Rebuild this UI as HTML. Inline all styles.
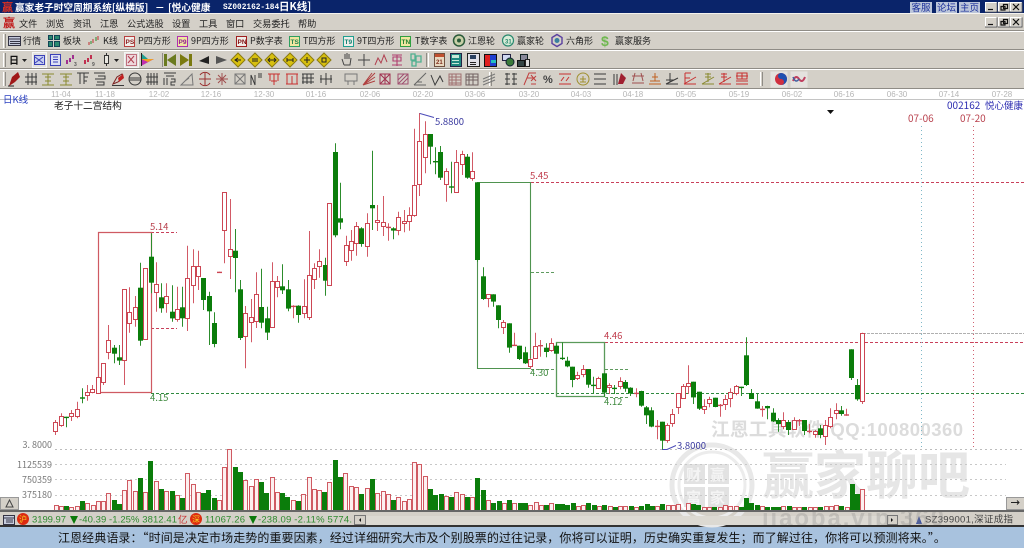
<!DOCTYPE html>
<html lang="zh"><head><meta charset="utf-8"><title>赢家老子时空周期系统</title>
<style>
html,body{margin:0;padding:0;background:#fff}
#p{position:relative;width:1024px;height:548px;overflow:hidden;background:#d4d0c8;font:9px "Noto Sans CJK SC",sans-serif;color:#222;filter:blur(.3px)}
#p div{position:absolute;white-space:nowrap}
svg{position:absolute;left:0;top:0}
text{font-family:"Noto Sans CJK SC",sans-serif}
.m{top:16px;font-size:9.2px;line-height:14px;color:#222}
.t{top:34px;font-size:9px;line-height:14px;color:#222}
.d{top:90px;font:8px "Liberation Sans",sans-serif;color:#b5b5b5;line-height:9px;transform:translateX(-50%)}
.b{top:2px;height:11px;background:#bcc6da;color:#1a2f9a;font-size:9.5px;line-height:11px;text-align:center}
.h{top:0;color:#fff;font-weight:bold;font-size:9.7px;line-height:14px}
</style></head><body><div id="p">
<div style="left:0;top:0;width:1024px;height:13px;background:#0a246a"></div>
<div class="h" style="left:15px">赢家老子时空周期系统[纵横版]</div>
<div class="h" style="left:155px">－</div>
<div class="h" style="left:168px">[悦心健康</div>
<div class="h" style="left:223px;top:3px;line-height:10px;font-family:'Liberation Mono',monospace;font-size:7.8px">SZ002162-184</div>
<div class="h" style="left:279px;font-size:10.5px">日K线]</div>
<div class="b" style="left:910px;width:22px">客服</div><div class="b" style="left:936px;width:21px">论坛</div><div class="b" style="left:959px;width:21px">主页</div>
<div style="left:0;top:89px;width:1024px;height:422px;background:#fff"></div>
<div style="left:0;top:527px;width:1024px;height:21px;background:#a8c2de"></div>
<div style="left:0;top:525px;width:1024px;height:2px;background:#333"></div>

<div class="m" style="left:19px">文件</div><div class="m" style="left:46px">浏览</div><div class="m" style="left:73px">资讯</div><div class="m" style="left:100px">江恩</div><div class="m" style="left:127px">公式选股</div><div class="m" style="left:172px">设置</div><div class="m" style="left:199px">工具</div><div class="m" style="left:226px">窗口</div><div class="m" style="left:253px">交易委托</div><div class="m" style="left:298px">帮助</div>

<div class="t" style="left:23px">行情</div><div class="t" style="left:63px">板块</div><div class="t" style="left:103px">K线</div><div class="t" style="left:138px">P四方形</div><div class="t" style="left:191px">9P四方形</div><div class="t" style="left:250px">P数字表</div><div class="t" style="left:303px">T四方形</div><div class="t" style="left:357px">9T四方形</div><div class="t" style="left:415px">T数字表</div><div class="t" style="left:468px">江恩轮</div><div class="t" style="left:517px">赢家轮</div><div class="t" style="left:566px">六角形</div><div class="t" style="left:615px">赢家服务</div>

<div class="d" style="left:61px">11-04</div><div class="d" style="left:105px">11-18</div><div class="d" style="left:159px">12-02</div><div class="d" style="left:211px">12-16</div><div class="d" style="left:264px">12-30</div><div class="d" style="left:316px">01-16</div><div class="d" style="left:370px">02-06</div><div class="d" style="left:423px">02-20</div><div class="d" style="left:475px">03-06</div><div class="d" style="left:529px">03-20</div><div class="d" style="left:581px">04-03</div><div class="d" style="left:633px">04-18</div><div class="d" style="left:686px">05-05</div><div class="d" style="left:739px">05-19</div><div class="d" style="left:792px">06-02</div><div class="d" style="left:844px">06-16</div><div class="d" style="left:897px">06-30</div><div class="d" style="left:949px">07-14</div><div class="d" style="left:1002px">07-28</div>

<svg id="s" width="1024" height="548" viewBox="0 0 1024 548" fill="none">
<g id="wm" stroke="none">
<text x="711" y="436" font-size="18.5" font-weight="bold" fill="#dcdcdc" textLength="252" style="font-family:'Liberation Sans','Noto Sans CJK SC',sans-serif">江恩工具软件 QQ:100800360</text>
<text x="762" y="494" font-size="52" font-weight="bold" fill="#e6e6e6">赢家聊吧</text>
<circle cx="712" cy="485" r="40" fill="none" stroke="#e8e8e8" stroke-width="5"/>
<circle cx="712" cy="485" r="33" fill="none" stroke="#ececec" stroke-width="3"/>
<rect x="684" y="464" width="21" height="20" fill="#e2e2e2"/><rect x="708" y="464" width="21" height="20" fill="#e2e2e2"/><rect x="684" y="487" width="21" height="20" fill="#e2e2e2"/><rect x="708" y="487" width="21" height="20" fill="#e2e2e2"/>
<text x="686" y="480" font-size="15" font-weight="bold" fill="#f4f4f4">财</text><text x="710" y="480" font-size="15" font-weight="bold" fill="#f4f4f4">赢</text><text x="686" y="503" font-size="15" font-weight="bold" fill="#f4f4f4">富</text><text x="710" y="503" font-size="15" font-weight="bold" fill="#f4f4f4">家</text>
</g>
<path d="M0 99.5H1024" stroke="#c4c4c4"/>
<g id="lines"></g>
<g id="cd"></g>
<g id="vol"></g>
<g id="lbl" stroke="none" font-size="9.5" style="font-family:'Liberation Sans'">
<text x="150" y="230" fill="#b8404c">5.14</text>
<text x="150" y="401" fill="#3f8a3f">4.15</text>
<text x="530" y="179" fill="#c03c4c">5.45</text>
<text x="530" y="376" fill="#3f8a3f">4.30</text>
<text x="604" y="339" fill="#c03c4c">4.46</text>
<text x="604" y="405" fill="#3f8a3f">4.12</text>
<text x="435" y="125" fill="#3c3ca0">5.8800</text>
<text x="677" y="449" fill="#3c3ca0">3.8000</text>
<text x="908" y="122" fill="#b8404c" font-size="10">07-06</text>
<text x="960" y="122" fill="#b8404c" font-size="10">07-20</text>
<text x="947" y="109" fill="#2a2ab0" font-size="10">002162</text>
<text x="985" y="109" fill="#2a2ab0" font-size="9.5" style="font-family:'Noto Sans CJK SC',sans-serif">悦心健康</text>
<text x="3" y="103" fill="#2a40c0" font-size="9.5" style="font-family:'Noto Sans CJK SC',sans-serif">日K线</text>
<text x="54" y="109" fill="#222" font-size="9.7" style="font-family:'Noto Sans CJK SC',sans-serif">老子十二宫结构</text>
<g fill="#777" font-size="9" text-anchor="end"><text x="52" y="448">3. 8000</text><text x="52" y="468">1125539</text><text x="52" y="483">750359</text><text x="52" y="498">375180</text></g>
</g>
<path d="M827 110h7l-3.500 4z" fill="#111"/>
<!-- chart buttons -->
<rect x="0.500" y="497.500" width="18" height="12" fill="#d4d0c8" stroke="#999"/><path d="M6 507l3.500-7 3.500 7z" stroke="#444"/>
<rect x="1006.500" y="497.500" width="18" height="12" fill="#d4d0c8" stroke="#999"/><path d="M1011 502.500h8m-2-2l2 2-2 2" stroke="#222"/>
<!-- status strip -->
<rect x="0" y="510" width="1024" height="2" fill="#666"/>
<g id="status">
<rect x="3.500" y="515.500" width="11" height="9" fill="#c7cdde" stroke="#334"/><path d="M4 518h10M6 520h7M6 522h7" stroke="#334"/>
<circle cx="23" cy="519" r="6" fill="#dc2a10"/><text x="19" y="522" font-size="8" fill="#f6d020">沪</text>
<text x="32" y="522.500" font-size="9.5" fill="#2f8a2f" style="font-family:'Liberation Sans'" textLength="34">3199.97</text>
<path d="M70 516h8l-4 8z" fill="#0a7a0a"/>
<text x="79" y="522.500" font-size="9.5" fill="#2f8a2f" style="font-family:'Liberation Sans'" textLength="98">-40.39 -1.25% 3812.41</text>
<text x="178" y="523" font-size="9.5" fill="#c83030">亿</text>
<circle cx="196" cy="519" r="6" fill="#dc2a10"/><text x="192" y="522" font-size="8" fill="#f6d020">深</text>
<text x="205" y="522.500" font-size="9.5" fill="#2f8a2f" style="font-family:'Liberation Sans'" textLength="40">11067.26</text>
<path d="M249 516h8l-4 8z" fill="#0a7a0a"/>
<text x="258" y="522.500" font-size="9.5" fill="#2f8a2f" style="font-family:'Liberation Sans'" textLength="94">-238.09 -2.11% 5774.</text>
<rect x="354.500" y="515.500" width="11" height="9" fill="#d4d0c8" stroke="#777"/><path d="M361 518v4l-2-2z" fill="#111"/>
<rect x="366" y="516" width="520" height="9" fill="#dcd9d2"/>
<rect x="887.500" y="515.500" width="10" height="9" fill="#d4d0c8" stroke="#777"/><path d="M891 518v4l2-2z" fill="#111"/>
<path d="M910 513v12" stroke="#999"/>
<path d="M916 524l3-8 3 8z" fill="#3a50a0"/>
<text x="925" y="522.500" font-size="9.5" fill="#444" style="font-family:'Liberation Sans','Noto Sans CJK SC'" textLength="88">SZ399001,深证成指</text>
<svg x="700" y="512" width="270" height="13"><text x="62" y="14" font-size="24" font-weight="bold" fill="#8a8a8a" fill-opacity=".3" textLength="182" style="font-family:'Liberation Sans'">jiaoba.vip 360</text></svg>
</g>
<!-- toolbar separators -->
<g stroke="#8f8c86"><path d="M0 13.500H1024" stroke="#f4f2ee"/><path d="M0 30.500H1024M0 49.500H1024M0 68.500H1024M0 88.500H1024"/></g>
<g stroke="#fff"><path d="M0 31.500H1024M0 50.500H1024M0 69.500H1024"/><path d="M3.500 34v14M3.500 53v14M3.500 72v14M428.500 53v14M489.500 72v14M760.500 72v14" stroke="#fff"/></g>
<g stroke="#8f8c86"><path d="M5.500 34v14M5.500 53v14M5.500 72v14M162.500 53v14M426.500 53v14M491.500 72v14M762.500 72v14"/></g>
<g id="ic"></g>
<!-- window buttons -->
<g stroke="#444"><g id="wb"></g></g>
<!-- main logo -->
<text x="3" y="27" font-size="12" font-weight="bold" fill="#c01818" stroke="none">赢</text>
<text x="2" y="11" font-size="11" font-weight="bold" fill="#e03020" stroke="none">赢</text>
</svg>
<div style="left:58px;top:530px;font-size:12px;line-height:15px;color:#111;letter-spacing:.08px;font-family:'Noto Sans CJK SC',sans-serif">江恩经典语录：“时间是决定市场走势的重要因素，经过详细研究大市及个别股票的过往记录，你将可以证明，历史确实重复发生；而了解过往，你将可以预测将来。”。</div>
</div>
<script>
var NS='http://www.w3.org/2000/svg';
function E(par,tag,at,txt){var e=document.createElementNS(NS,tag);for(var k in at)e.setAttribute(k,at[k]);if(txt)e.textContent=txt;document.getElementById(par).appendChild(e);return e}
/* reference lines */
[["M151 393.500H1024","#2f8a3f","3 2"],["M531 182.500H1024","#c8405a","3 2"],["M605 342.500H1024","#c8405a","3 2"],
 ["M151 232.500H177","#c8405a","3 2"],["M151 328.500H177","#c8405a","3 2"],["M531 272.500H556","#5f9a5f","3 2"],["M531 369.500H556","#5f9a5f","3 2"],["M605 369.500H630","#5f9a5f","3 2"],["M605 397.500H630","#5f9a5f","3 2"],
 ["M921.500 126V449","#7fb8c8","1 3"],["M973.500 126V449","#d06070","1 3"],
 ["M55 449.500H1024","#bdbdbd","2 3"],["M55 464.500H1006","#c8c8c8","2 3"],["M55 479.500H1006","#c8c8c8","2 3"],["M55 495.500H1006","#c8c8c8","2 3"],
 ["M863 333.500H1024","#b0b0b0","3 1"]
].forEach(function(l){E('lines','path',{d:l[0],stroke:l[1],'stroke-dasharray':l[2]})});
[["M98.500 392.500V232.500H151.500V392.500Z","#cf5a62",1.2],["M477.500 182.500V368.500H530.500V182.500H477.500Z","#4f934f",1.1],["M556.500 342.500V396.500H604.500V342.500Z","#5a9a5a",1.3],
 ["M419.500 113V113.500H420L434 117.500","#4a4ab8",1],["M662 449.500H667L676 445.500","#4a4ab8",1]
].forEach(function(l){E('lines','path',{d:l[0],stroke:l[1],'stroke-width':l[2]})});
/* candles in zoom-crop coordinates */
function C(ox,oy,a){a.forEach(function(c){
 var X=Math.round(ox+c[0]/3),h=oy+c[2]/3,t=oy+c[3]/3,b=oy+c[4]/3,l=oy+c[5]/3,r=c[1]=='r';
 var col=r?'#cc4653':'#0b7d0b';
 E('cd','path',{d:'M'+(X+.5)+' '+h.toFixed(1)+'V'+l.toFixed(1),stroke:r?'#d25a66':'#2c8c2c'});
 if(b-t<1.6){E('cd','rect',{x:X-2,y:t.toFixed(1),width:5,height:1.4,fill:col});return}
 if(r)E('cd','rect',{x:X-1.5,y:Math.round(t)+.5,width:4,height:Math.max(1,Math.round(b-t)),fill:'#fff',stroke:col});
 else E('cd','rect',{x:X-2,y:t.toFixed(1),width:5,height:(b-t).toFixed(1),fill:col});
})}
C(40,130,[[46,'r',870,875,903,915],[62,'r',850,857,885,890],[78,'g',860,860,864,892],[94,'r',840,848,857,873],[110,'r',815,836,857,865],[126,'g',775,802,805,820],[142,'r',765,785,793,812],[157,'r',765,778,787,790],[173,'r',738,740,787,788],[189,'r',700,700,758,765],[205,'r',585,629,666,688],[221,'g',645,653,671,700],[237,'g',645,682,692,705],[253,'r',478,478,690,765],[268,'r',472,546,578,608],[284,'r',498,532,569,590],[300,'g',398,473,632,647],[316,'r',415,415,628,628],[332,'g',310,380,458,490],[347,'r',397,463,488,545],[363,'g',460,502,535,548],[379,'r',460,498,520,548],[395,'g',466,545,565,575],[411,'r',470,536,565,575],[427,'g',470,532,565,590],[442,'r',347,444,565,603],[458,'r',358,409,466,520],[474,'r',362,409,438,480],[490,'g',444,444,510,540],[506,'g',485,498,544,645],[522,'g',547,579,642,652],[538,'r',425,425,427,427],[553,'r',187,187,301,400],[569,'r',207,358,380,447]]);
C(230,110,[[14,'g',357,422,444,547],[30,'g',510,538,684,690],[46,'r',588,610,678,775],[62,'r',567,622,638,697],[78,'r',487,553,633,654],[94,'g',476,591,638,655],[110,'g',590,625,668,690],[125,'r',457,513,651,652],[141,'r',498,513,531,562],[157,'g',463,529,541,552],[173,'g',510,538,596,604],[189,'r',586,587,590,625],[205,'g',586,587,615,638],[221,'r',508,588,608,625],[236,'r',363,495,620,630],[252,'r',460,475,507,537],[268,'r',418,452,468,503],[284,'g',443,465,512,557],[298,'r',280,280,527,527],[315,'g',100,126,376,382],[331,'g',218,325,338,358],[347,'r',377,406,455,468],[362,'r',360,394,421,452],[378,'r',336,349,401,437],[394,'g',352,355,402,410],[410,'r',310,340,410,440],[426,'g',122,285,295,360],[442,'r',285,331,338,363],[458,'r',258,335,347,378],[473,'r',340,350,353,392],[490,'g',352,355,362,388],[505,'r',305,322,362,376],[521,'r',300,333,338,367],[537,'r',292,314,333,362],[553,'r',56,224,314,320],[568,'r',10,94,222,258],[584,'r',34,73,142,190],[600,'g',72,72,110,163],[616,'g',112,153,156,193],[631,'g',108,126,203,210],[647,'r',175,183,223,275],[663,'g',155,229,232,250],[679,'r',120,155,245,245],[695,'r',122,132,163,195],[711,'g',132,140,203,206],[726,'r',127,183,203,212]]);
C(470,170,[[22,'g',37,37,270,275],[38,'g',292,319,387,390],[54,'r',373,373,385,412],[69,'g',373,373,395,410],[85,'g',406,406,450,475],[100,'r',450,455,470,492],[116,'g',460,460,533,548],[132,'r',488,524,526,526],[148,'g',527,527,567,570],[164,'g',530,547,580,582],[180,'r',565,568,590,597],[196,'r',488,527,563,563],[211,'r',510,525,528,560],[227,'g',520,533,546,562],[243,'r',505,518,540,545],[259,'g',520,527,551,552],[275,'g',517,563,566,570],[291,'g',560,572,589,592],[306,'g',590,590,630,652],[322,'r',605,616,624,630],[338,'r',585,597,612,622],[354,'g',597,597,644,653],[370,'g',620,644,647,672],[385,'r',620,624,653,655],[401,'g',610,610,668,680],[417,'r',640,645,652,672],[433,'g',645,653,655,672],[449,'r',622,634,648,658],[465,'g',630,636,656,665],[480,'g',652,653,670,678],[497,'r',655,668,670,682],[512,'g',662,663,707,710],[528,'g',708,712,736,762],[544,'g',712,721,770,772],[560,'r',750,767,769,808],[576,'g',755,755,812,838]]);
C(640,320,[[82,'r',310,315,360,368],[97,'r',267,283,310,320],[113,'r',220,220,261,282],[128,'r',192,199,234,235],[144,'r',136,190,198,222],[160,'g',185,185,232,252],[176,'g',215,215,266,270],[192,'r',238,257,267,282],[208,'r',230,237,248,262],[224,'g',233,233,261,262],[240,'r',252,254,256,290],[256,'r',225,237,252,270],[271,'r',205,215,232,262],[287,'r',195,198,220,226],[303,'g',200,200,203,228],[319,'g',52,106,195,198],[334,'g',207,219,237,237],[350,'g',222,244,266,266],[366,'r',258,266,268,290],[382,'g',257,258,265,298],[398,'g',265,278,304,306],[413,'g',295,300,312,335],[429,'r',277,301,320,328],[445,'g',300,306,330,345],[461,'r',292,301,329,330],[477,'r',297,300,302,318],[492,'g',300,300,333,345],[508,'r',312,332,334,340],[524,'r',330,333,342,353],[540,'g',315,325,345,355],[556,'r',300,316,350,375],[571,'r',265,292,320,325],[587,'r',250,271,280,298],[603,'g',258,271,282,287],[619,'r',266,283,285,287],[634,'g',88,88,174,180],[650,'g',177,195,238,242],[666,'r',38,38,243,252]]);
/* volume */
function V(ox,oy,s){s.split(' ').forEach(function(p){
 var q=p.split(','),X=Math.round(ox+q[0]/3),r=q[1]=='r',y=Math.round(oy+q[2]/3);
 if(r)E('vol','rect',{x:X-1.5,y:y+.5,width:4,height:510-y,fill:'#fdf0f0',stroke:'#cf5a62'});
 else E('vol','rect',{x:X-2,y:y,width:5,height:510-y,fill:'#0b7d0b'});
})}
V(0,430,"167,r,226 183,r,229 198,g,228 214,r,230 230,r,227 246,g,212 262,r,220 278,r,224 294,r,214 310,r,214 325,r,190 341,g,210 357,g,221 373,r,181 388,r,151 404,r,184 420,g,145 436,r,185 451,g,92 467,r,154 483,g,176 499,r,183 515,g,183 531,r,194 546,g,203 562,r,129 578,r,163 594,r,185 610,g,189 625,g,181 641,g,205 657,r,211 673,r,112 688,r,58 704,g,110 720,g,126 736,r,149 752,r,169 767,r,147 783,g,155 799,g,189 815,r,142 831,r,187 847,g,189 862,g,201 878,r,211 894,g,212 910,r,193 926,r,142 941,r,178 957,r,181 973,g,185 988,r,157 1005,g,90 1020,g,141");
V(340,430,"16,r,128 32,r,169 48,r,172 64,g,191 80,r,175 96,g,146 112,r,190 128,r,184 143,r,191 159,g,211 175,r,201 191,r,214 207,r,207 223,r,97 238,r,101 254,r,139 270,g,176 286,g,195 302,g,193 318,r,199 333,g,202 349,r,187 365,r,192 381,g,201 396,r,202 412,g,144 428,g,180 444,r,211 460,g,218 476,g,214 491,r,219 507,g,211 523,r,220 539,g,220 555,g,220 571,r,226 587,r,217 602,r,225 618,g,225 634,r,220 650,g,223 666,g,223 682,g,225 698,g,220 714,r,229 729,r,225 745,g,220 761,g,225 777,r,228 793,g,225 809,r,229 825,g,230 840,r,228 856,r,229 872,g,229 888,r,230 904,g,227 920,g,222 936,g,228 951,r,228 967,g,222 983,r,226 999,r,226 1015,r,222");
V(684,400,"11,r,310 27,g,312 43,g,316 59,r,322 75,r,322 91,g,322 107,r,322 123,r,316 139,r,318 155,r,318 170,g,322 186,g,293 202,g,308 218,g,316 234,r,318 250,g,320 266,g,320 282,g,320 298,r,318 314,g,318 330,r,320 345,r,322 361,g,320 377,r,322 393,r,322 409,g,320 425,r,318 441,r,318 456,r,315 472,g,318 488,r,322 504,g,252 519,g,282 535,r,266");
/* icons */
function P(x,y,c,d,w){var g=E('ic','path',{d:d,stroke:c,transform:'translate('+x+' '+y+')'});if(w)g.setAttribute('stroke-width',w);return g}
function F(x,y,c,d){return E('ic','path',{d:d,fill:c,transform:'translate('+x+' '+y+')'})}
function R(x,y,w,h,f,s){E('ic','rect',{x:x+.5,y:y+.5,width:w,height:h,fill:f,stroke:s||'none'})}
function T(x,y,s,c,z){E('ic','text',{x:x,y:y,fill:c,'font-size':z||7,'font-weight':'bold',style:"font-family:'Liberation Sans'"},s)}
/* toolbar 1 */
R(8,36,12,9,'#c4c9dc','#334');P(8,0,'#334','M1 39H12M2 41.500h10M2 43.500h10');
R(48,35,4,4,'#2a8a70','#145');R(54,35,5,4,'#2a8a70','#145');R(48,41,4,5,'#2a8a70','#145');R(54,41,5,5,'#2a8a70','#145');
P(88,41,'#c03030','M1 4v-3M5 2v-4');P(88,41,'#2a8a2a','M3 3v-3M8 0v-4');P(88,41,'#c03030','M10 -1v-4');
[[124,'PS','#b84040','#8a2020','#f0eeea'],[177,'P9','#b030b0','#902090','#f0e6a0'],[236,'PN','#a02020','#801010','#f0eeea'],[289,'TS','#2fa060','#208050','#f0e6a0'],[343,'T9','#20a090','#108070','#f0eeea'],[400,'TN','#30a040','#208030','#f0e6a0']].forEach(function(a){R(a[0],36,10,10,a[4],a[2]);T(a[0]+1.5,44,a[1],a[3],6.5)});
E('ic','circle',{cx:459,cy:40.500,r:5.500,stroke:'#2a5a3a','stroke-width':1.5,fill:'#c8d0a8'});E('ic','circle',{cx:459,cy:40.500,r:2,fill:'#2a5a3a'});
E('ic','circle',{cx:508,cy:40.500,r:5.500,stroke:'#2a8a70',fill:'#d8ecd8','stroke-width':1.2});T(505,43.500,'31','#2a8a70',6);
P(557,40.500,'#5a40a0','M0-6L5-3V3L0 6L-5 3V-3Z',1.4);E('ic','circle',{cx:557,cy:40.500,r:2.500,fill:'#3a80a0'});
T(601,46,'$','#70b850',14);
/* toolbar 2 */
E('ic','text',{x:9,y:64,'font-size':10,fill:'#111','font-weight':'bold'},'日');F(22,59,'#222','M0 0h5l-2.500 3z');
R(32,52,14,15,'#e4e2de','#f4f4f4');R(34,55,10,9,'#c8d0f0','#3a40b8');P(34,55,'#3a40b8','M1 2l8 6M9 2l-8 6');
R(50,54,10,11,'#dde0f4','#3a40b8');P(50,54,'#3a40b8','M3 3h5M3 5.500h5M3 8h5');
P(66,66,'#a03090','M1-2v-4M4-4v-4M7-7v-4',2);T(74,66,'3','#555',5);P(84,66,'#c03050','M1-2v-4M4-4v-4M7-7v-4',2);T(92,66,'9','#555',5);
R(104,55,4,8,'#e8e6e0','#333');P(104,53,'#333','M2.500 0v2M2.500 10v3');F(114,59,'#222','M0 0h5l-2.500 3z');
R(124,52,14,15,'#e8e6e2','#f4f4f4');R(126,54,10,11,'#eed8dc','#c07080');P(126,54,'#b04050','M2 2l6 7M8 2l-6 7');
F(141,53,'#20a090','M0 0l7 6H0z');F(141,59,'#c030b0','M0 0h13L0 7z');F(141,59,'#f0a020','M0 0h13l-6 3z');P(141,53,'#222','M.500 0V13');
[[169],[186],[204],[222]].forEach(function(a,i){
 if(i<2)F(a[0]-(i?1:2),60,i?'#7a7a10':'#6a7a20',i?'M-5-6L4 0L-5 6zM4-6h3V6H4z':'M-3-6h3V6h-3zM0 0l9-6V6z');
 else F(a[0],60,i==2?'#222':'#555',i==2?'M5-4V4L-5 1z':'M-6-4V4L5 0z');
});
[238,255,272,290,307,324].forEach(function(x,i){F(x,60,'#d8c010','M0-7L7 0L0 7L-7 0Z');P(x,60,'#8a7a10','M0-7L7 0L0 7L-7 0Z');P(x,60,'#222',['M-3 0H3M0-2L-3 0L0 2','M-3-1H3M-3 1H3','M-3 0H3M-2-2L-4 0L-2 2M2-2L4 0L2 2','M-3-2V2M3-2V2M-3 0H3','M0-3V3M-3 0H3','M-2-2H2V2H-2Z'][i])});
P(347,60,'#444','M-3 5L-5-1M-3 5h6l1-7M-2-1v-5M0-1v-6M2-1v-5');
P(364,60,'#444','M-6 0H6M0-6V6');
P(381,60,'#b04050','M-6 5L-3-2L0 3L3-5L6 2');P(397,60,'#b04070','M-5-5h10M-4-3h8v4h-8zM0-5V6M-5 5h10',1.1);P(415,60,'#50b090','M-4-6h4v6h-4zM1-4h5v6h-5zM-3 1h4v5h-4z',1.3);
R(434,53,10,13,'#e8d8c0','#705040');F(434,53,'#c05030','M1 1h9v3H1z');T(436,64,'21','#803020',6);
R(450,53,11,13,'#208880','#224');F(452,55,'#c8e8d8','M0 0h7v3H0z');P(452,60,'#c8e8d8','M0 .500h7M0 3.500h7');
R(467,53,12,13,'#e0e0e8','#222');F(470,55,'#2a4060','M0 0h6v4H0z');P(470,62,'#222','M0 .500h6M0 2.500h6');
R(484,54,12,12,'#2040d0','#111');F(485,55,'#e02020','M0 0h5v11H0z');F(491,60,'#20c0c0','M0 0h5v3H0z');
R(502,54,8,6,'#d0d8f0','#224');E('ic','circle',{cx:510,cy:62,r:4,fill:'#3a7a3a',stroke:'#123'});
R(520,54,7,6,'#889','#122');R(517,60,7,6,'#344','#111');R(525,59,4,7,'#ddd','#222');
/* toolbar 3 */
var K='#3a3a3a',RD='#c83030',GD='#8a8a30';
F(14,79,'#a01818','M-5 7L-2-2L4-7L6-2L1 3Z');P(14,79,'#222','M-6 7H0');
var TT=[[31,K,'M-6-2H6M-6 3H6M-3-6V6M1-6V6M5-6V6'],[48,GD,'M-6-5H6M-6 6H6M-3-2H3M-3 2H3M0-5V6'],[66,GD,'M-6-5H6M-6 6H6M-3-2H3M-3 2H3M0-5V6'],[83,K,'M-6-6H6M-3-6V5M1-6V5M1-2H5M1 2H4'],[100,K,'M-6-6H5M-2-3H5L5 0H-5M-3 3H4V6H-4'],[135,K,'M-6 0a6 6 0 1 0 12 0a6 6 0 1 0-12 0M-6-1H6M-6 1H6'],[152,K,'M-6-2H6M-6 3H6M-4-6V6M-1-6V6M2-6V6M5-6V6'],[170,K,'M-6-6H6M-4-3H4M-6-1V6M-3-1V6M1 0H5V3H1V6H5'],[187,'#777','M-6 6L5-5L6 6ZM-2 2L2-1'],[205,'#9a3030','M-6 0H6M0-6V6M-5-4a6 6 0 0 1 10 0M-5 4a6 6 0 0 0 10 0'],[222,'#a05050','M-6 0H6M0-6V6M-4-4L4 4M4-4L-4 4'],[240,'#777','M-5-5H5V5H-5ZM-5-5L5 5M5-5L-5 5'],[256,K,'M-5 6V-4L-1 6V-4M3-6V-1M5-6V-1'],[274,RD,'M-6-5H6M-4-5V2M0-5V6M4-5V2M-3 2H3'],[292,RD,'M-6-5H6M-6 5H6M-5-5V5M5-5V5M0-3V5'],[308,K,'M-6-5H6M-6-1H6M-6 3H6M-5-5V5M-1-5V5M3-5V5'],[326,K,'M-6 0H6M-5-4V4M0-6V6M5-4V4'],[351,'#777','M-6-5H6V2H-6ZM-3 2V6M3 2V6'],[369,'#b04040','M-6 6L6-6M-6 6L3-6M-6 6L6-2M-6 6L6 2'],[385,'#a03050','M-5-5H5V5H-5ZM-5-5L5 5M5-5L-5 5M0-5V5'],[403,'#a05070','M-5-5H5V5H-5ZM-5 5L5-5M-5 1L1-5M-1 5L5-1'],[420,'#666','M-6 6L6-6M-6 6H6M-3 3H2'],[437,K,'M-6-4L-2 6L3-3L6 3'],[455,'#a07070','M-6-5H6V6H-6ZM-6-2H6M-6 1H6M-6 4H6M-3-5V6M1-5V6'],[472,'#706060','M-6-5H6V6H-6ZM-6-2H6M-6 1H6M-3-5V6M1-5V6'],[489,'#777','M-6 0L6-5M-6 3L6-2M-6 6L6 1'],[511,K,'M-6-5H-1M-6 0H-1M-6 5H-1M-4-6V6M1-5H6M1 0H6M1 5H6M3-6V6'],[530,'#c04040','M-6 6L-1-6H6M-3-1H3M1-4L6 2M1 2L6-3M1 5H6'],[565,RD,'M-6-5H6M-6 5H6M-4 2L-1-2M1 2L4-2'],[583,'#a09030','M-6 0a6 6 0 1 0 12 0a6 6 0 1 0-12 0M-3 0H3M0-3V3M-3 3H3'],[600,K,'M-6-5H6M-6 0H6M-6 5H6'],[638,'#a05050','M-6 4H6M-6-3H6M-3-6L-5 2M3-6L5 2'],[655,'#c06020','M-6 5H6M-5 2H5M-3-2H3M0-6V2'],[672,K,'M-6 5L6-1M-6 5H6M-2-6V3M-6 1H2'],[690,RD,'M-6 5H6M-6 5L6-2M-5-6V4M-5-6H1M-5-1H0'],[708,GD,'M-6 5H6M-6 5L6-2M-3-5H3M-3-2H3M0-6V3'],[725,RD,'M-6 5H6M-6 5L6-2M-4-5H2M-1-6V3M-4-2H2'],[742,RD,'M-6 5H6M-6 2H6M-5-6H5V0H-5ZM0-6V0M-6-3H6']];
TT.forEach(function(a){P(a[0],79,a[1],a[2])});
P(118,80,'#7a2020','M-5 4L-1-3L4-6L5-2L0 2Z');F(118,80,'#c02020','M0-2L5-6L6-2L1 2Z');P(118,85,K,'M-6 .500H6');
T(543,83,'%','#444',11);
P(620,79,K,'M-6-5V6M-3-5V6');F(621,79,'#a02030','M-3 5L0-6L5-1L2 5Z');
R(770,71,17,16,'#e4e2de');R(790,71,17,16,'#e4e2de');
E('ic','circle',{cx:781,cy:79,r:6,fill:'#d03040'});F(781,79,'#2050b0','M0-6A6 6 0 0 1 0 6A3 3 0 0 0 0 0A3 3 0 0 1 0-6Z');
P(799,79,'#c04060','M-6 2C-4-3-2-3 0 0S4 3 6-2',2);P(799,79,'#4060a0','M-6-2C-4 3-2 3 0 0',1.5);
/* window buttons */
[[985,2],[998,2],[1010,2],[985,17],[998,17],[1010,17]].forEach(function(b,i){
 E('wb','rect',{x:b[0]+.5,y:b[1]+.5,width:11,height:9,fill:'#d4d0c8',stroke:'#fff'});
 E('wb','path',{d:'M'+(b[0]+12)+' '+(b[1]+.5)+'V'+(b[1]+10)+'H'+b[0],stroke:'#555'});
 var x=b[0],y=b[1],d=['M'+(x+3)+' '+(y+7.5)+'h5','M'+(x+5.5)+' '+(y+2.5)+'h4v4h-4zM'+(x+3)+' '+(y+4.5)+'h4v3.500h-4z','M'+(x+3)+' '+(y+2)+'l6 6m0-6l-6 6'][i%3];
 E('wb','path',{d:d,stroke:'#111','stroke-width':1.2});
});
</script>
</body></html>
